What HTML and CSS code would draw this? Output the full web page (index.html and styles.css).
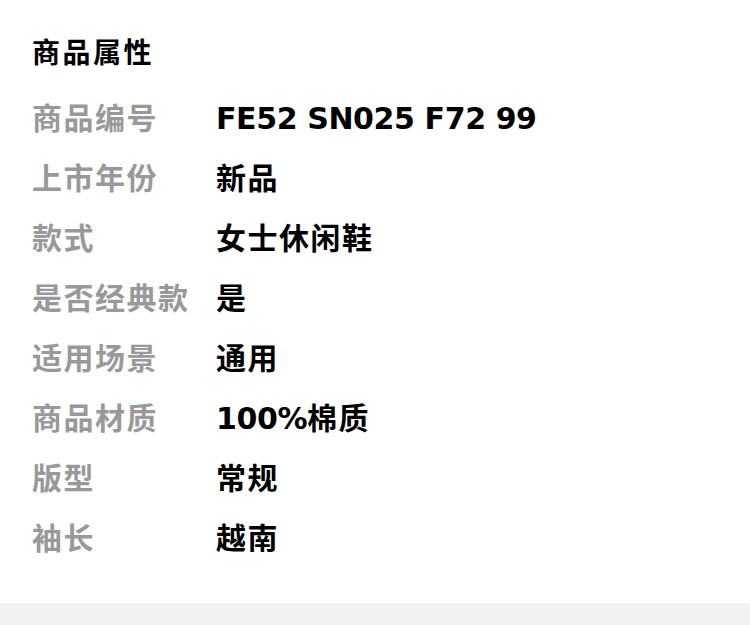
FILE: index.html
```html
<!DOCTYPE html>
<html lang="zh">
<head>
<meta charset="utf-8">
<link rel="stylesheet" href="styles.css">
</head>
<body>
<section class="attrs">
  <h2 class="title">商品属性</h2>
  <div class="list">
    <div class="row"><span class="label">商品编号</span><span class="value"><span class="latin">FE52 SN025 F72 99</span></span></div>
    <div class="row"><span class="label">上市年份</span><span class="value">新品</span></div>
    <div class="row"><span class="label">款式</span><span class="value">女士休闲鞋</span></div>
    <div class="row"><span class="label">是否经典款</span><span class="value">是</span></div>
    <div class="row"><span class="label">适用场景</span><span class="value">通用</span></div>
    <div class="row"><span class="label">商品材质</span><span class="value"><span class="latin">100%</span>棉质</span></div>
    <div class="row"><span class="label">版型</span><span class="value">常规</span></div>
    <div class="row"><span class="label">袖长</span><span class="value">越南</span></div>
  </div>
</section>
<div class="band"></div>
</body>
</html>
```
FILE: styles.css
```css
html, body {
  margin: 0;
  padding: 0;
  background: #ffffff;
}
body {
  font-family: "Noto Sans CJK SC", "Noto Sans", sans-serif;
}
.attrs {
  padding: 31px 0 37px 32px;
}
.title {
  margin: 0 0 15px 0;
  font-size: 28px;
  line-height: 40px;
  font-weight: 700;
  color: #000;
  letter-spacing: 2.5px;
}
.list {
  display: flex;
  flex-direction: column;
}
.row {
  display: flex;
  align-items: center;
  height: 60px;
}
.label {
  width: 184px;
  flex: none;
  font-size: 30px;
  font-weight: 700;
  color: #999999;
  letter-spacing: 1.5px;
}
.value {
  font-size: 30px;
  font-weight: 700;
  color: #000;
  letter-spacing: 1.5px;
}
.latin {
  font-family: "DejaVu Sans", "Noto Sans CJK SC", sans-serif;
  letter-spacing: -0.4px;
}
.band {
  height: 22px;
  background: #f2f2f2;
}
```
